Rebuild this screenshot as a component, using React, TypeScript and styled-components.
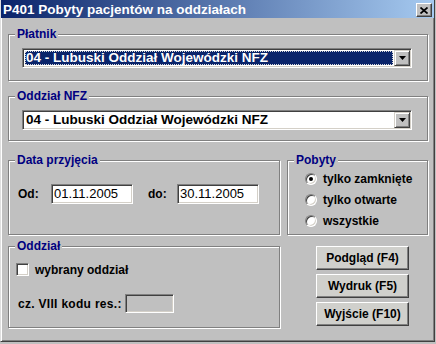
import React from 'react';
import styled, { createGlobalStyle } from 'styled-components';

const GlobalStyle = createGlobalStyle`
  html, body {
    margin: 0;
    padding: 0;
    background: #c0c0c0;
  }
  body {
    font-family: 'Liberation Sans', Arial, sans-serif;
    font-size: 12px;
    color: #000;
  }
  * {
    box-sizing: border-box;
  }
`;

const Window = styled.div`
  width: 435px;
  height: 342px;
  background: #c0c0c0;
  border-left: 1px solid #dfdfdf;
  border-right: 1px solid #404040;
  border-bottom: 1px solid #404040;
  box-shadow: inset 1px 0 #fff, inset -1px -1px #808080;
  display: flex;
  flex-direction: column;
`;

const TitleBar = styled.div`
  height: 18px;
  flex: none;
  display: flex;
  align-items: center;
  justify-content: space-between;
  padding: 0 2px 0 2px;
  background: linear-gradient(to right, #0a246a, #a6caf0);
  color: #fff;
  font-weight: bold;
  font-size: 13.5px;
  white-space: nowrap;
`;

const CloseButton = styled.div`
  width: 16px;
  height: 14px;
  margin-top: 2px;
  display: flex;
  align-items: center;
  justify-content: center;
  background: #c0c0c0;
  border: 1px solid;
  border-color: #fff #404040 #404040 #fff;
  box-shadow: inset -1px -1px #808080;
`;

const Body = styled.div`
  display: flex;
  flex-direction: column;
  padding: 0 6px 0 7px;
`;

const Group = styled.fieldset<{ $gap?: number; $width?: number }>`
  margin: ${(p) => p.$gap ?? 0}px 0 0 0;
  padding: 0;
  min-width: 0;
  border: 1px solid #808080;
  box-shadow: 1px 1px 0 #fff, inset 1px 1px 0 #fff;
  ${(p) => (p.$width ? `width: ${p.$width}px; flex: none;` : 'flex: 1;')}
`;

const Legend = styled.legend`
  margin-left: 6px;
  padding: 0 2px;
  background: #c0c0c0;
  color: #000080;
  font-weight: bold;
  font-size: 12px;
  line-height: 13px;
`;

const GroupBody = styled.div<{ $pad: string }>`
  padding: ${(p) => p.$pad};
  display: flex;
  flex-direction: column;
`;

const Row = styled.div<{ $gap: number }>`
  display: flex;
  align-items: stretch;
  gap: 7px;
  margin-top: ${(p) => p.$gap}px;
`;

const Combo = styled.div`
  display: flex;
  height: 20px;
  background: #fff;
  border: 1px solid;
  border-color: #808080 #fff #fff #808080;
  box-shadow: inset 1px 1px #404040, inset -1px -1px #d4d0c8;
  padding: 1px;
`;

const ComboValue = styled.div`
  flex: 1;
  padding: 1px;
  display: flex;
`;

const ComboText = styled.div<{ $selected?: boolean }>`
  flex: 1;
  height: 14px;
  line-height: 12px;
  padding-left: 0;
  font-weight: bold;
  font-size: 13.5px;
  white-space: nowrap;
  border: 1px dotted ${(p) => (p.$selected ? '#d8d8d8' : 'transparent')};
  background: ${(p) => (p.$selected ? '#0a246a' : 'transparent')};
  color: ${(p) => (p.$selected ? '#fff' : '#000')};
`;

const DropButton = styled.div`
  width: 16px;
  flex: none;
  display: flex;
  align-items: center;
  justify-content: center;
  background: #c0c0c0;
  border: 1px solid;
  border-color: #d4d0c8 #404040 #404040 #d4d0c8;
  box-shadow: inset 1px 1px #fff, inset -1px -1px #808080;
`;

const FieldRow = styled.div<{ $indent?: number; $top?: number }>`
  display: flex;
  align-items: center;
  padding-left: ${(p) => p.$indent ?? 0}px;
  margin-top: ${(p) => p.$top ?? 0}px;
`;

const FieldLabel = styled.span<{ $width: number; $lead?: number; $spacing?: number }>`
  width: ${(p) => p.$width}px;
  margin-left: ${(p) => p.$lead ?? 0}px;
  letter-spacing: ${(p) => p.$spacing ?? 0}px;
  flex: none;
  font-weight: bold;
  font-size: 12px;
  white-space: nowrap;
`;

const TextBox = styled.div<{ $width: number; $height: number; $disabled?: boolean }>`
  width: ${(p) => p.$width}px;
  height: ${(p) => p.$height}px;
  flex: none;
  padding: 1px 0 0 2px;
  background: ${(p) => (p.$disabled ? '#c0c0c0' : '#fff')};
  border: 1px solid;
  border-color: #808080 #fff #fff #808080;
  box-shadow: inset 1px 1px #404040, inset -1px -1px #d4d0c8;
  font-size: 13px;
  line-height: 16px;
`;

const RadioRow = styled.div`
  display: flex;
  align-items: center;
  gap: 6px;
  height: 21px;
  font-weight: bold;
  font-size: 12px;
`;

const Radio = styled.span<{ $checked?: boolean }>`
  position: relative;
  width: 12px;
  height: 12px;
  flex: none;
  border-radius: 50%;
  background: #fff;
  border: 1px solid;
  border-color: #808080 #fff #fff #808080;
  box-shadow: inset 1px 1px #404040, inset -1px -1px #d4d0c8;

  &::after {
    content: '';
    display: ${(p) => (p.$checked ? 'block' : 'none')};
    position: absolute;
    left: 3px;
    top: 3px;
    width: 4px;
    height: 4px;
    border-radius: 50%;
    background: #000;
  }
`;

const CheckRow = styled.div`
  display: flex;
  align-items: center;
  gap: 6px;
  height: 13px;
  margin-top: 10px;
  font-weight: bold;
  font-size: 12px;
`;

const CheckBox = styled.span`
  width: 13px;
  height: 13px;
  flex: none;
  background: #fff;
  border: 1px solid;
  border-color: #808080 #fff #fff #808080;
  box-shadow: inset 1px 1px #404040, inset -1px -1px #d4d0c8;
`;

const ButtonColumn = styled.div`
  display: flex;
  flex-direction: column;
  gap: 4px;
  padding-top: 6px;
  margin-left: 29px;
`;

const Button = styled.button`
  width: 93px;
  height: 24px;
  padding: 0;
  font: inherit;
  font-weight: bold;
  font-size: 12px;
  color: #000;
  background: #d0d0cc;
  border: 1px solid;
  border-color: #fff #404040 #404040 #fff;
  box-shadow: inset -1px -1px #808080;
`;

const Arrow = () => (
  <svg width="7" height="4" viewBox="0 0 7 4">
    <polygon points="0,0 7,0 3.5,4" fill="#000" />
  </svg>
);

const CloseGlyph = () => (
  <svg width="8" height="7" viewBox="0 0 8 7">
    <path d="M0.5 0.5 L7.5 6.5 M7.5 0.5 L0.5 6.5" stroke="#000" strokeWidth="1.7" />
  </svg>
);

const ComboBox: React.FC<{ value: string; selected?: boolean }> = ({ value, selected }) => (
  <Combo>
    <ComboValue>
      <ComboText $selected={selected}>{value}</ComboText>
    </ComboValue>
    <DropButton>
      <Arrow />
    </DropButton>
  </Combo>
);

const options = ['tylko zamknięte', 'tylko otwarte', 'wszystkie'];

export default function App() {
  const nfz = '04 - Lubuski Oddział Wojewódzki NFZ';
  return (
    <>
      <GlobalStyle />
      <Window>
        <TitleBar>
          <span>P401 Pobyty pacjentów na oddziałach</span>
          <CloseButton>
            <CloseGlyph />
          </CloseButton>
        </TitleBar>
        <Body>
          <Group $gap={10}>
            <Legend>Płatnik</Legend>
            <GroupBody $pad="7px 15px 12px 13px">
              <ComboBox value={nfz} selected />
            </GroupBody>
          </Group>

          <Group $gap={9}>
            <Legend>Oddział NFZ</Legend>
            <GroupBody $pad="7px 15px 10px 13px">
              <ComboBox value={nfz} />
            </GroupBody>
          </Group>

          <Row $gap={13}>
            <Group $width={272}>
              <Legend>Data przyjęcia</Legend>
              <GroupBody $pad="17px 0 0 9px">
                <FieldRow>
                  <FieldLabel $width={33}>Od:</FieldLabel>
                  <TextBox $width={82} $height={20}>01.11.2005</TextBox>
                  <FieldLabel $width={29} $lead={15}>do:</FieldLabel>
                  <TextBox $width={82} $height={20}>30.11.2005</TextBox>
                </FieldRow>
              </GroupBody>
            </Group>
            <Group>
              <Legend>Pobyty</Legend>
              <GroupBody $pad="1px 0 3px 17px">
                {options.map((o, i) => (
                  <RadioRow key={o}>
                    <Radio $checked={i === 0} />
                    {o}
                  </RadioRow>
                ))}
              </GroupBody>
            </Group>
          </Row>

          <Row $gap={5}>
            <Group $width={272}>
              <Legend>Oddział</Legend>
              <GroupBody $pad="0 0 14px 7px">
                <CheckRow>
                  <CheckBox />
                  wybrany oddział
                </CheckRow>
                <FieldRow $indent={2} $top={18}>
                  <FieldLabel $width={107} $spacing={0.3}>cz. VIII kodu res.:</FieldLabel>
                  <TextBox $width={49} $height={19} $disabled />
                </FieldRow>
              </GroupBody>
            </Group>
            <ButtonColumn>
              <Button>Podgląd (F4)</Button>
              <Button>Wydruk (F5)</Button>
              <Button>Wyjście (F10)</Button>
            </ButtonColumn>
          </Row>
        </Body>
      </Window>
    </>
  );
}
